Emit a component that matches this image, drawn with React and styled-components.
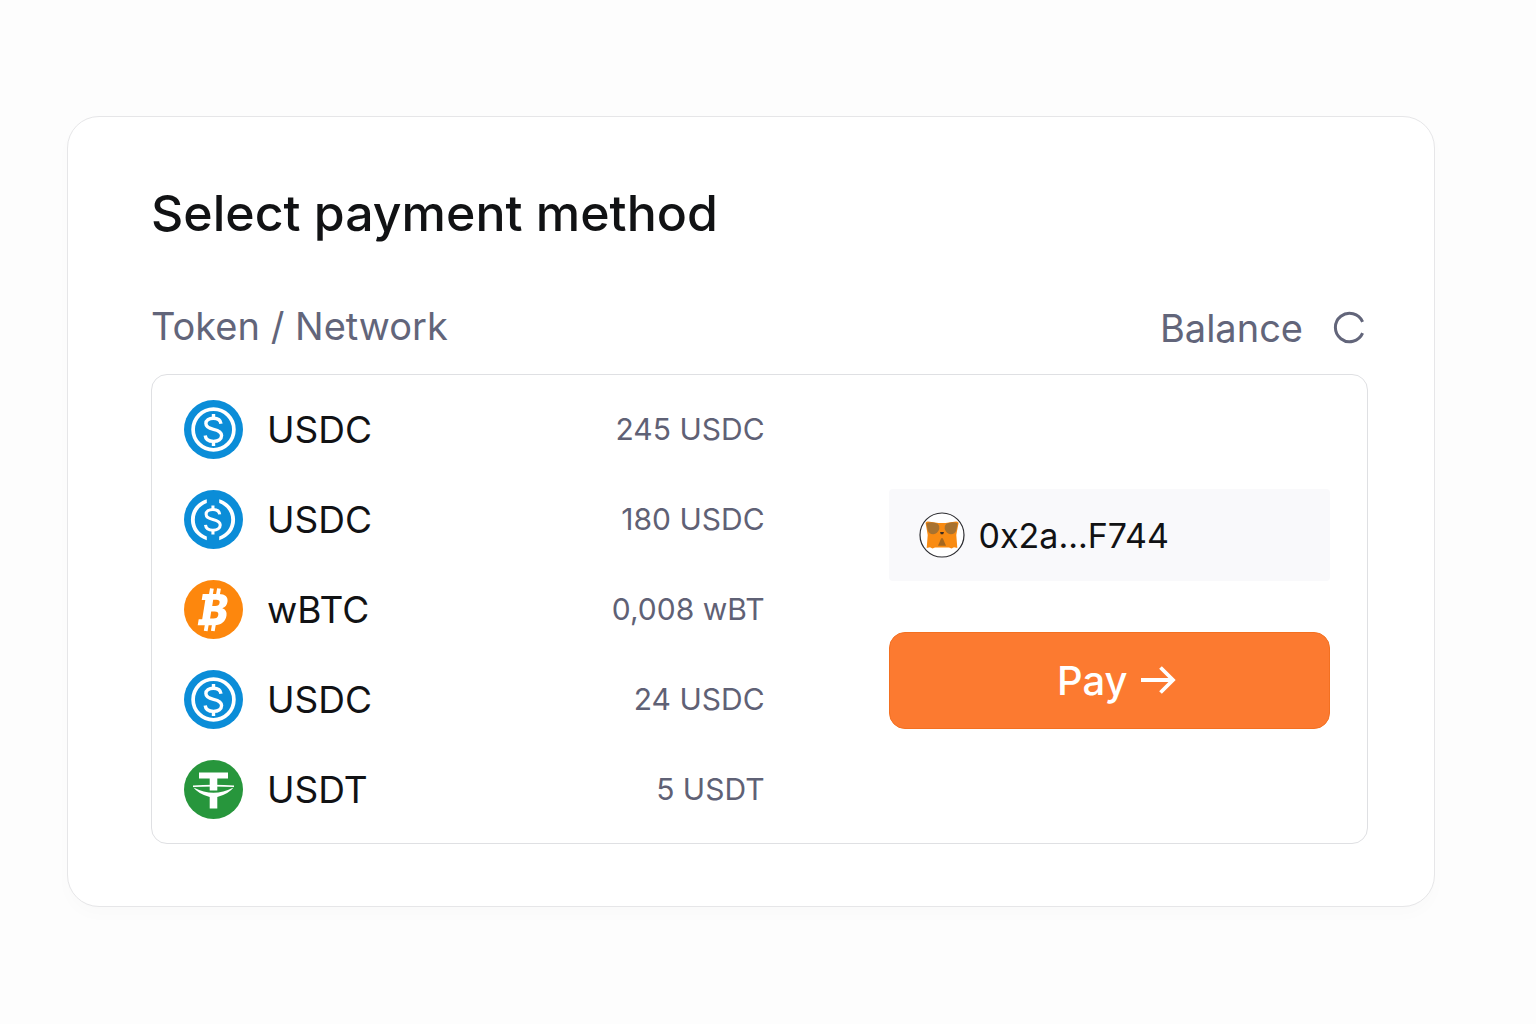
// src/App.jsx

import React from 'react';
import styled, { createGlobalStyle } from 'styled-components';

const GlobalStyle = createGlobalStyle`
  * {
    box-sizing: border-box;
  }

  body {
    margin: 0;
    background: #fdfdfd;
    color: #111214;
    font-family: Inter, 'Liberation Sans', sans-serif;
  }
`;

const Page = styled.main`
  min-height: 100vh;
  padding: 116px 101px 116px 67px;
`;

const Card = styled.section`
  padding: 64px 66px 62px 83px;
  background: #ffffff;
  border: 1px solid #e6e6e8;
  border-radius: 32px;
  box-shadow: 0 8px 16px rgba(0, 0, 0, 0.015);
`;

const Title = styled.h1`
  margin: 0;
  font-size: 50px;
  line-height: 64px;
  font-weight: 500;
`;

const ListHeader = styled.div`
  display: flex;
  align-items: center;
  justify-content: space-between;
  margin-top: 54px;
  color: #62657a;
  font-size: 38px;
  line-height: 48px;
`;

const HeaderGroup = styled.div`
  display: flex;
  align-items: center;
  gap: 29px;
  padding-top: 5px;
`;

const RefreshButton = styled.button`
  display: flex;
  padding: 0;
  border: 0;
  background: none;
  color: inherit;
  cursor: pointer;
`;

const Panel = styled.div`
  display: grid;
  grid-template-columns: minmax(0, 580fr) minmax(0, 441fr);
  column-gap: 124px;
  align-items: center;
  margin-top: 22px;
  padding: 9px 37px 9px 32px;
  border: 1px solid #dfe0e3;
  border-radius: 16px;
`;

const TokenTable = styled.table`
  width: 100%;
  border-collapse: collapse;
`;

const TokenRow = styled.tr`
  height: 90px;
`;

const TokenCell = styled.th`
  padding: 0;
  font-size: 37px;
  font-weight: 400;
  text-align: left;
`;

const TokenLabel = styled.div`
  display: flex;
  align-items: center;
  gap: 24px;
`;

const AmountCell = styled.td`
  padding: 0;
  color: #5f6175;
  font-size: 30px;
  text-align: right;
`;

const Checkout = styled.div`
  display: flex;
  flex-direction: column;
  gap: 51px;
`;

const Wallet = styled.div`
  display: flex;
  align-items: center;
  gap: 14px;
  height: 92px;
  padding: 0 30px;
  border-radius: 4px;
  background: #f9f9fb;
  color: #111214;
  font-size: 34px;
`;

const PayButton = styled.button`
  display: flex;
  align-items: center;
  justify-content: center;
  gap: 12px;
  height: 97px;
  padding: 0 0 0 14px;
  border: 1px solid #f37021;
  border-radius: 16px;
  background: #fc7a30;
  color: #ffffff;
  font-family: inherit;
  font-size: 40px;
  font-weight: 500;
  cursor: pointer;
`;

const Icon = styled.svg`
  display: block;
  flex: none;
`;

const DollarSign = () => (
  <g fill="none" stroke="#fff" strokeWidth="3.4">
    <path d="M37 23.8c-.4-3.5-3.3-5.5-7.6-5.5-4.5 0-7.5 2.1-7.5 5.3 0 3.4 2.7 4.7 7.6 5.8 5.3 1.2 8.1 2.6 8.1 6.2 0 3.5-3.3 5.8-8.1 5.8-4.8 0-7.900-2.200-8.300-5.900" />
    <path d="M29.5 14v5M29.5 41v5" />
  </g>
);

const UsdcIcon = () => (
  <Icon width="59" height="59" viewBox="0 0 59 59" aria-hidden="true">
    <circle cx="29.5" cy="29.5" r="29.5" fill="#0b8dd8" />
    <circle cx="29.5" cy="29.5" r="20.4" fill="none" stroke="#fff" strokeWidth="3.7" />
    <DollarSign />
  </Icon>
);

const UsdcSplitIcon = () => (
  <Icon width="59" height="59" viewBox="0 0 59 59" aria-hidden="true">
    <circle cx="29.5" cy="29.5" r="29.5" fill="#0b8dd8" />
    <path
      d="M22.8 9.2C13 12.500 6.900 20 6.900 29.700s6.100 17.200 15.900 20.500v-3.700C15.500 43.500 10.800 37.500 10.800 29.700S15.500 16 22.800 13z"
      fill="#fff"
    />
    <path
      d="M35.200 9.2C45 12.500 51.100 20 51.100 29.700s-6.100 17.200-15.900 20.500v-3.700C42.500 43.500 47.200 37.500 47.200 29.700S42.500 16 35.200 13z"
      fill="#fff"
    />
    <g transform="translate(2.4 3) scale(.9)">
      <DollarSign />
    </g>
  </Icon>
);

const BitcoinIcon = () => (
  <Icon width="59" height="59" viewBox="0 0 59 59" aria-hidden="true">
    <circle cx="29.5" cy="29.5" r="29.5" fill="#fd870d" />
    <path
      d="M18.7 14h16.3c6.2 0 9.2 3 8.500 7.700-.5 3.400-2.300 5.500-5.200 6.500 3.300 1.100 4.800 3.600 4.200 7.400-.9 6-5.200 9.600-12 9.600H13.700l1-6h3.500l3.100-19.200h-3.600zM29.200 19.800l-1 6.100h3.100c2.600 0 4-1.100 4.300-3.200.3-2-.8-2.900-3.200-2.900zM27.200 31.600l-1.100 7h3.300c2.900 0 4.500-1.200 4.900-3.600.4-2.300-.9-3.400-3.700-3.400z"
      fill="#fff"
      fillRule="evenodd"
    />
    <path
      d="M27.9 8.5l-1.200 7M35 8.5l-1.200 7M22.900 44l-1.200 7M30 44l-1.200 7"
      stroke="#fff"
      strokeWidth="3.8"
    />
  </Icon>
);

const TetherIcon = () => (
  <Icon width="59" height="59" viewBox="0 0 59 59" aria-hidden="true">
    <circle cx="29.5" cy="29.5" r="29.5" fill="#27963c" />
    <path d="M15 12.600h29v5.800H33.300v12h-7.600v-12H15z" fill="#fff" />
    <path d="M9 26.200q20.500-1.200 41 0" fill="none" stroke="#fff" strokeWidth="1.6" />
    <path d="M9.500 27.500Q20 32.800 29.500 32.800T49.500 27.500Q45 33.800 33.300 37V48.500h-7.600V37Q14 33.800 9.500 27.500z" fill="#fff" />
  </Icon>
);

const FoxIcon = () => (
  <Icon width="46" height="46" viewBox="0 0 46 46" aria-hidden="true">
    <circle cx="23" cy="23" r="22" fill="#fff" stroke="#2c2c30" strokeWidth="1.2" />
    <path
      d="M6.600 11Q6.800 9.300 9 9.500l7 .9q7 1 14 0l7-.9q2.400-.2 2.600 1.500l-1.700 8.500-.6 3.500 1 13-3.300-.8-2.500 1.200-2.500-1h-14l-2.500 1-2.500-1.200-3.300.8 1-13-.6-3.500z"
      fill="#f98b12"
    />
    <path
      d="M7.300 11.200q6.500-2.200 11.500.6 2.200 2.200 1.500 5.200-1.700 5-6 5.300Q9.500 22 8.500 17.500zM38.700 11.200q-6.500-2.200-11.500.6-2.200 2.200-1.500 5.200 1.700 5 6 5.300 4.800-.3 5.800-4.800z"
      fill="#a8722f"
    />
    <path d="M21 20h4l-.8 2.200h-2.400z" fill="#3b2b22" />
    <path d="M22.200 26.200h1.600l3.200 7.600h-8z" fill="#a5671f" />
  </Icon>
);

const RefreshIcon = () => (
  <Icon width="36" height="34" viewBox="0 0 36 34" aria-hidden="true">
    <path
      d="M30.6 10.800A14.200 14.200 0 1 0 30.600 22.200"
      fill="none"
      stroke="currentColor"
      strokeWidth="3"
    />
  </Icon>
);

const ArrowIcon = () => (
  <Icon width="36" height="30" viewBox="0 0 36 30" aria-hidden="true">
    <path
      d="M1 14h32M20.500 1.500L33 14 20.500 26.500"
      fill="none"
      stroke="currentColor"
      strokeWidth="3.8"
    />
  </Icon>
);

const tokens = [
  { id: 1, name: 'USDC', amount: '245 USDC', icon: UsdcIcon },
  { id: 2, name: 'USDC', amount: '180 USDC', icon: UsdcSplitIcon },
  { id: 3, name: 'wBTC', amount: '0,008 wBT', icon: BitcoinIcon },
  { id: 4, name: 'USDC', amount: '24 USDC', icon: UsdcIcon },
  { id: 5, name: 'USDT', amount: '5 USDT', icon: TetherIcon }
];

export const App = () => {
  return (
    <>
      <GlobalStyle />
      <Page>
        <Card>
          <Title>Select payment method</Title>
          <ListHeader>
            <span>Token / Network</span>
            <HeaderGroup>
              <span>Balance</span>
              <RefreshButton type="button" aria-label="Refresh balance">
                <RefreshIcon />
              </RefreshButton>
            </HeaderGroup>
          </ListHeader>
          <Panel>
            <TokenTable>
              <tbody>
                {tokens.map(({ id, name, amount, icon: TokenIcon }) => (
                  <TokenRow key={id}>
                    <TokenCell scope="row">
                      <TokenLabel>
                        <TokenIcon />
                        {name}
                      </TokenLabel>
                    </TokenCell>
                    <AmountCell>{amount}</AmountCell>
                  </TokenRow>
                ))}
              </tbody>
            </TokenTable>
            <Checkout>
              <Wallet>
                <FoxIcon />
                <span>0x2a...F744</span>
              </Wallet>
              <PayButton type="button">
                Pay
                <ArrowIcon />
              </PayButton>
            </Checkout>
          </Panel>
        </Card>
      </Page>
    </>
  );
};

export default App;
